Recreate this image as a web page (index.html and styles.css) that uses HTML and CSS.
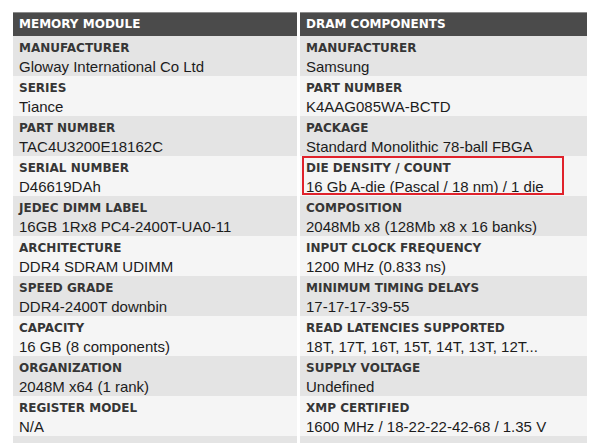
FILE: index.html
```html
<!DOCTYPE html>
<html>
<head>
<meta charset="utf-8">
<link rel="stylesheet" href="styles.css">
</head>
<body>
<div class="specs">
  <section class="col col-left">
    <div class="head">MEMORY MODULE</div>
    <div class="row dark"><div class="label">MANUFACTURER</div><div class="value">Gloway International Co Ltd</div></div>
    <div class="row light"><div class="label">SERIES</div><div class="value">Tiance</div></div>
    <div class="row dark"><div class="label">PART NUMBER</div><div class="value">TAC4U3200E18162C</div></div>
    <div class="row light"><div class="label">SERIAL NUMBER</div><div class="value">D46619DAh</div></div>
    <div class="row dark"><div class="label">JEDEC DIMM LABEL</div><div class="value">16GB 1Rx8 PC4-2400T-UA0-11</div></div>
    <div class="row light"><div class="label">ARCHITECTURE</div><div class="value">DDR4 SDRAM UDIMM</div></div>
    <div class="row dark"><div class="label">SPEED GRADE</div><div class="value">DDR4-2400T downbin</div></div>
    <div class="row light"><div class="label">CAPACITY</div><div class="value">16 GB (8 components)</div></div>
    <div class="row dark"><div class="label">ORGANIZATION</div><div class="value">2048M x64 (1 rank)</div></div>
    <div class="row light"><div class="label">REGISTER MODEL</div><div class="value">N/A</div></div>
    <div class="row dark"><div class="label">MANUFACTURING DATE</div><div class="value">Undefined</div></div>
  </section>
  <section class="col col-right">
    <div class="head">DRAM COMPONENTS</div>
    <div class="row dark"><div class="label">MANUFACTURER</div><div class="value">Samsung</div></div>
    <div class="row light"><div class="label">PART NUMBER</div><div class="value">K4AAG085WA-BCTD</div></div>
    <div class="row dark"><div class="label">PACKAGE</div><div class="value">Standard Monolithic 78-ball FBGA</div></div>
    <div class="row light marked"><div class="label">DIE DENSITY / COUNT</div><div class="value">16 Gb A-die (Pascal / 18 nm) / 1 die</div><span class="highlight"></span></div>
    <div class="row dark"><div class="label">COMPOSITION</div><div class="value">2048Mb x8 (128Mb x8 x 16 banks)</div></div>
    <div class="row light"><div class="label">INPUT CLOCK FREQUENCY</div><div class="value">1200 MHz (0.833 ns)</div></div>
    <div class="row dark"><div class="label">MINIMUM TIMING DELAYS</div><div class="value">17-17-17-39-55</div></div>
    <div class="row light"><div class="label">READ LATENCIES SUPPORTED</div><div class="value">18T, 17T, 16T, 15T, 14T, 13T, 12T...</div></div>
    <div class="row dark"><div class="label">SUPPLY VOLTAGE</div><div class="value">Undefined</div></div>
    <div class="row light"><div class="label">XMP CERTIFIED</div><div class="value">1600 MHz / 18-22-22-42-68 / 1.35 V</div></div>
    <div class="row dark"><div class="label">XMP EXTREME</div><div class="value">Not available</div></div>
  </section>
</div>
</body>
</html>
```

FILE: styles.css
```css
html, body {
  margin: 0;
  padding: 0;
  background: #ffffff;
  overflow: hidden;
}
body {
  width: 600px;
  height: 443px;
}
.specs {
  display: grid;
  grid-template-columns: 284px 287px;
  column-gap: 3px;
  padding: 12px 0 0 13px;
}
.col {
  display: flex;
  flex-direction: column;
}
.head {
  height: 24px;
  box-sizing: border-box;
  border-top: 1px solid #8c8c8c;
  background: #4b4b4b;
  color: #ffffff;
  font-family: "DejaVu Sans", Verdana, sans-serif;
  font-weight: bold;
  font-size: 12px;
  line-height: 23px;
  padding: 0 6px;
  white-space: nowrap;
}
.row {
  position: relative;
  height: 40px;
  box-sizing: border-box;
  padding: 5px 6px 0;
  white-space: nowrap;
}
.dark { background: #e4e4e4; }
.light { background: #f5f5f5; }
.label {
  font-family: "DejaVu Sans", Verdana, sans-serif;
  font-weight: bold;
  font-size: 12px;
  line-height: 14px;
  color: #363636;
}
.value {
  margin-top: 2px;
  font-family: "Liberation Sans", Arial, sans-serif;
  font-size: 15px;
  line-height: 19px;
  color: #1c1c1c;
}
.highlight {
  position: absolute;
  left: 2px;
  top: 0;
  width: 262px;
  height: 39px;
  box-sizing: border-box;
  border: 2px solid #e0222b;
}
```
